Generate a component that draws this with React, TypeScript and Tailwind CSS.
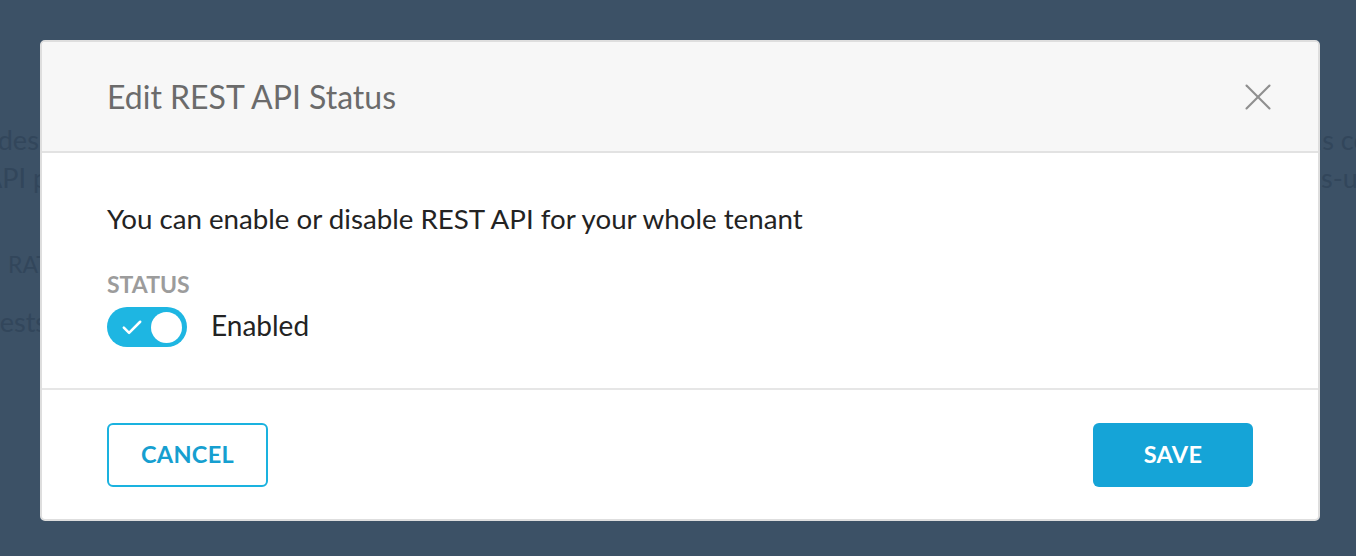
import React from 'react';
import { X } from 'lucide-react';

function Toggle({ checked }: { checked: boolean }) {
  return (
    <div
      className={`flex items-center justify-between w-[80px] h-[40px] rounded-full px-[5px] ${
        checked ? 'bg-[#1eb6e2]' : 'bg-[#cccccc]'
      }`}
    >
      <svg width="28" height="28" viewBox="0 0 24 24" className="ml-[6px]">
        <path d="M5 12.5l4.5 4.5L19 7.5" fill="none" stroke="white" strokeWidth="2.2" strokeLinecap="round" strokeLinejoin="round" />
      </svg>
      <div className="w-[31px] h-[31px] rounded-full bg-white" />
    </div>
  );
}

export default function App() {
  return (
    <div className="relative w-[1356px] h-[556px] overflow-hidden bg-[#3c5166] font-['Lato','Liberation_Sans',sans-serif]">
      {/* page behind the overlay */}
      <div className="text-[27px] leading-[38px] text-[#32465b] whitespace-nowrap pt-[121px]">
        <div className="flex">
          <div className="w-[1278px] shrink-0 overflow-hidden">
            <span className="inline-block -ml-[62px]">provides an interface to your tenant data</span>
          </div>
          <span>Calls count</span>
        </div>
        <div className="flex">
          <div className="w-[1282px] shrink-0 overflow-hidden">
            <span className="inline-block -ml-[16px]">API per tenant and user</span>
          </div>
          <span>calls-ups</span>
        </div>
        <div className="mt-[52px] text-[23px] leading-[30px]">
          <span className="inline-block ml-[8px]">RATE LIMITS</span>
        </div>
        <div className="mt-[24px]">
          <span className="inline-block -ml-[54px]">requests, per minute</span>
        </div>
      </div>

      {/* modal */}
      <div className="absolute inset-0 pt-[40px] pl-[40px]">
        <div className="w-[1280px] h-[481px] bg-white border-2 border-[#dedede] rounded-[5px] overflow-hidden flex flex-col">
          <div className="h-[111px] shrink-0 bg-[#f7f7f7] border-b-2 border-[#e2e2e2] flex items-center justify-between pl-[65px] pr-[37px]">
            <h2 className="text-[32px] text-[#6b6b6b]">Edit REST API Status</h2>
            <X className="w-[46px] h-[46px] text-[#8f8f8f]" strokeWidth={1.1} />
          </div>
          <div className="h-[237px] shrink-0 border-b-2 border-[#e6e6e6] pl-[65px] pt-[51px]">
            <p className="text-[27.7px] leading-[30px] text-[#232323]">You can enable or disable REST API for your whole tenant</p>
            <div className="mt-[38px] text-[23px] leading-[24px] font-bold text-[#9c9c9c]">STATUS</div>
            <div className="flex items-center gap-[24px] mt-[11px]">
              <Toggle checked />
              <span className="text-[28px] leading-[32px] pb-[4px] text-[#232323]">Enabled</span>
            </div>
          </div>
          <div className="flex-1 flex items-center justify-between pl-[65px] pr-[65px]">
            <button className="w-[161px] h-[64px] rounded-[6px] border-2 border-[#1ab2df] text-[#169fd0] text-[23.5px] font-bold tracking-[0.3px]">
              CANCEL
            </button>
            <button className="w-[160px] h-[64px] rounded-[6px] bg-[#15a4d7] text-white text-[23.5px] font-bold tracking-[0.3px]">
              SAVE
            </button>
          </div>
        </div>
      </div>
    </div>
  );
}
